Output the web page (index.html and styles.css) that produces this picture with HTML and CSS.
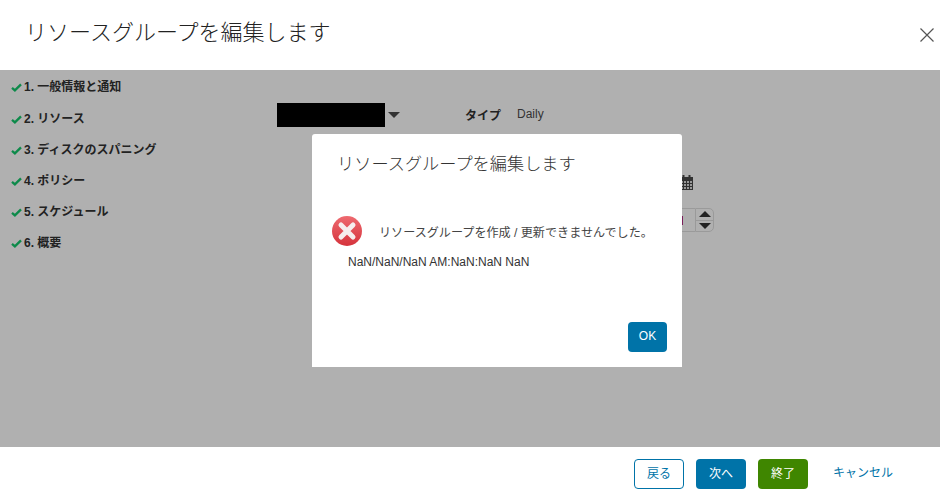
FILE: index.html
```
<!DOCTYPE html>
<html lang="ja">
<head>
<meta charset="utf-8">
<title>リソースグループを編集します</title>
<link rel="stylesheet" href="styles.css">
</head>
<body>
<div class="page">
  <header class="head">
    <h1 class="head-title">リソースグループを編集します</h1>
    <svg class="close" width="16" height="16" viewBox="0 0 16 16"><path d="M1.5 1.5 14.5 14.5M14.5 1.5 1.5 14.5" stroke="#555" stroke-width="1.2" fill="none"/></svg>
  </header>
  <main class="main">
    <ul class="steps">
      <li class="step"><svg class="check" width="11" height="9" viewBox="0 0 11 9"><path d="M1 4.8 3.9 7.4 10 1.4" stroke="#0d8a4a" stroke-width="2.3" fill="none"/></svg>1. 一般情報と通知</li>
      <li class="step"><svg class="check" width="11" height="9" viewBox="0 0 11 9"><path d="M1 4.8 3.9 7.4 10 1.4" stroke="#0d8a4a" stroke-width="2.3" fill="none"/></svg>2. リソース</li>
      <li class="step"><svg class="check" width="11" height="9" viewBox="0 0 11 9"><path d="M1 4.8 3.9 7.4 10 1.4" stroke="#0d8a4a" stroke-width="2.3" fill="none"/></svg>3. ディスクのスパニング</li>
      <li class="step"><svg class="check" width="11" height="9" viewBox="0 0 11 9"><path d="M1 4.8 3.9 7.4 10 1.4" stroke="#0d8a4a" stroke-width="2.3" fill="none"/></svg>4. ポリシー</li>
      <li class="step"><svg class="check" width="11" height="9" viewBox="0 0 11 9"><path d="M1 4.8 3.9 7.4 10 1.4" stroke="#0d8a4a" stroke-width="2.3" fill="none"/></svg>5. スケジュール</li>
      <li class="step"><svg class="check" width="11" height="9" viewBox="0 0 11 9"><path d="M1 4.8 3.9 7.4 10 1.4" stroke="#0d8a4a" stroke-width="2.3" fill="none"/></svg>6. 概要</li>
    </ul>
    <section class="form">
      <div class="form-top">
        <div class="redacted"></div>
        <span class="caret"></span>
        <span class="type-label">タイプ</span>
        <span class="type-value">Daily</span>
      </div>
      <div class="form-right">
        <svg class="calendar" width="13" height="16" viewBox="0 0 13 16"><path d="M0 2h13v13H0z" fill="#333"/><path d="M2.5 0h2v3h-2zM8.500 0h2v3h-2z" fill="#333"/><path d="M1 6h2v2H1zM4 6h2v2H4zM7 6h2v2H7zM10 6h2v2h-2zM1 9h2v2H1zM4 9h2v2H4zM7 9h2v2H7zM10 9h2v2h-2zM1 12h2v2H1zM4 12h2v2H4zM7 12h2v2H7zM10 12h2v2h-2z" fill="#9a9a9a"/></svg>
        <div class="spinner">
          <div class="spin-input"><span class="cursor"></span></div>
          <div class="spin-btns">
            <span class="spin-btn"><span class="tri-up"></span></span>
            <span class="spin-btn"><span class="tri-down"></span></span>
          </div>
        </div>
      </div>
    </section>
    <div class="modal">
      <h2 class="modal-title">リソースグループを編集します</h2>
      <div class="modal-msg">
        <svg class="err" width="32" height="32" viewBox="0 0 32 32">
          <defs><linearGradient id="rg" x1="0" y1="0" x2="0" y2="1"><stop offset="0" stop-color="#ee6a70"/><stop offset="1" stop-color="#d5333c"/></linearGradient></defs>
          <circle cx="16" cy="16" r="15" fill="url(#rg)"/>
          <path d="M10 10 22 22M22 10 10 22" stroke="#f6eeee" stroke-width="5" stroke-linecap="round" fill="none"/>
        </svg>
        <span class="msg-text">リソースグループを作成 / 更新できませんでした。</span>
      </div>
      <p class="modal-date">NaN/NaN/NaN AM:NaN:NaN NaN</p>
      <div class="modal-foot"><button class="btn btn-primary btn-ok">OK</button></div>
    </div>
  </main>
  <footer class="foot">
    <button class="btn btn-outline">戻る</button>
    <button class="btn btn-primary">次へ</button>
    <button class="btn btn-green">終了</button>
    <a class="cancel">キャンセル</a>
  </footer>
</div>
</body>
</html>
```
FILE: styles.css
```
* { box-sizing: border-box; }
html, body { margin: 0; padding: 0; }
body {
  font-family: "Liberation Sans", "Noto Sans CJK JP", sans-serif;
  background: #fff;
  color: #333;
}
.page { width: 940px; height: 494px; display: flex; flex-direction: column; overflow: hidden; }
.head { height: 70px; flex: none; display: flex; justify-content: space-between; align-items: flex-start; padding: 20px 5px 0 25px; background: #fff; }
.head-title { margin: 0; font-size: 22px; line-height: 26px; font-weight: 300; color: #222; }
.close { margin-top: 7px; }
.main { position: relative; flex: 1; background: #b0b0b0; display: flex; align-items: flex-start; }
.steps { list-style: none; margin: 0; padding: 6px 0 0 11px; width: 277px; flex: none; }
.step { height: 31px; line-height: 22px; font-size: 12px; font-weight: 700; color: #222; display: flex; align-items: flex-start; white-space: nowrap; }
.step + .step { padding-top: 1px; }
.check { margin: 7px 2px 0 0; flex: none; }
.form { flex: 1; padding-top: 33px; }
.form-top { display: flex; align-items: center; height: 24px; }
.redacted { width: 108px; height: 24px; background: #000; }
.caret { width: 0; height: 0; margin-left: 3px; border-left: 6px solid transparent; border-right: 6px solid transparent; border-top: 6px solid #333; }
.type-label { margin: -2px 0 0 65px; font-size: 12px; font-weight: 700; color: #222; }
.type-value { margin: -2px 0 0 16px; font-size: 12px; color: #333; }
.form-right { margin-left: 403px; margin-top: 48px; width: 35px; }
.calendar { display: block; }
.spinner { display: flex; margin-top: 17px; height: 24px; width: 33px; margin-left: 1px; }
.spin-input { width: 14px; border: 1px solid #9a9a9a; border-left: none; border-right: none; display: flex; align-items: center; }
.cursor { display: block; width: 2px; height: 9px; background: #7a1f5a; }
.spin-btns { width: 19px; border: 1px solid #9a9a9a; border-radius: 0 5px 5px 0; display: flex; flex-direction: column; }
.spin-btn { flex: 1; display: flex; align-items: center; justify-content: center; }
.spin-btn + .spin-btn { border-top: 1px solid #9a9a9a; }
.tri-up { width: 0; height: 0; border-left: 6px solid transparent; border-right: 6px solid transparent; border-bottom: 6px solid #222; }
.tri-down { width: 0; height: 0; border-left: 6px solid transparent; border-right: 6px solid transparent; border-top: 6px solid #222; }
.modal { position: absolute; left: 312px; top: 64px; width: 370px; height: 233px; background: #fff; border-radius: 3px 3px 0 0; display: flex; flex-direction: column; padding: 18px 15px 15px 19px; }
.modal-title { margin: 0; font-size: 17.2px; line-height: 24px; font-weight: 300; color: #333; padding-left: 6px; }
.modal-msg { display: flex; align-items: center; margin-top: 39px; height: 32px; }
.err { flex: none; }
.msg-text { margin-left: 16px; font-size: 12.1px; color: #444; white-space: nowrap; }
.modal-date { margin: 5px 0 0 17px; font-size: 12px; line-height: 20px; color: #333; }
.modal-foot { margin-top: auto; display: flex; justify-content: flex-end; }
.btn { flex: none; width: 50px; height: 30px; border-radius: 4px; border: 1px solid transparent; font: inherit; font-size: 12px; padding: 0 0 3px; }
.btn-ok { width: 39px; padding-bottom: 2px; }
.btn-primary { background: #0073a8; color: #fff; }
.btn-green { background: #3f8600; color: #fff; }
.btn-outline { background: #fff; color: #0073a8; border-color: #0073a8; }
.foot { height: 47px; flex: none; background: #fff; display: flex; align-items: flex-start; padding: 12px 0 0 634px; gap: 12px; }
.cancel { margin-left: 13px; font-size: 12px; line-height: 28px; color: #0073a8; white-space: nowrap; }
```
